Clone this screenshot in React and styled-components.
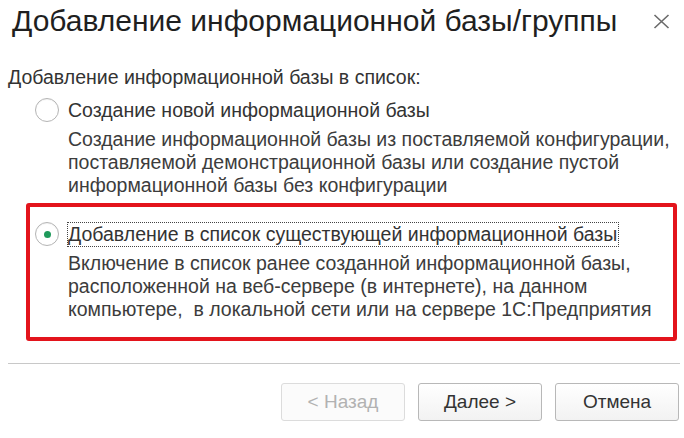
import styled, { createGlobalStyle } from "styled-components";

const GlobalStyle = createGlobalStyle`
    html, body {
        margin: 0;
        padding: 0;
        background: #ffffff;
    }
    body {
        font-family: "Liberation Sans", Arial, sans-serif;
        color: #333333;
    }
`;

const Dialog = styled.div`
    width: 684px;
    height: 438px;
    display: flex;
    flex-direction: column;
    background: #ffffff;
    overflow: hidden;
`;

const Header = styled.div`
    height: 42px;
    padding: 0 14px 0 12px;
    display: flex;
    align-items: center;
    justify-content: space-between;
`;

const Title = styled.h1`
    margin: 0;
    font-size: 30px;
    font-weight: normal;
    line-height: 40px;
    color: #1f1f1f;
    white-space: nowrap;
`;

const Close = styled.button`
    width: 18px;
    height: 16px;
    padding: 0;
    border: 0;
    background: none;
    display: flex;
    align-items: center;
    justify-content: center;
    cursor: pointer;
`;

const Body = styled.div`
    flex-grow: 1;
    padding: 0 4px 0 8px;
    display: flex;
    flex-direction: column;
`;

const Caption = styled.div`
    margin-top: 23px;
    font-size: 19.5px;
    line-height: 24px;
`;

const OptionList = styled.div`
    margin: 8px 0 0 27px;
    display: flex;
    flex-direction: column;
    gap: 24px;
`;

const Option = styled.div`
    position: relative;

    &::after {
        content: "";
        display: ${({$marked}) => $marked ? 'block' : 'none'};
        position: absolute;
        top: -18px;
        bottom: -20px;
        left: -9px;
        right: 3px;
        border: 4px solid #e3141c;
        border-radius: 3px;
        pointer-events: none;
    }
`;

const OptionRow = styled.label`
    height: 26px;
    display: flex;
    align-items: center;
    gap: 8px;
    font-size: 19.5px;
    cursor: pointer;
`;

const Radio = styled.span`
    width: 22px;
    height: 22px;
    flex-shrink: 0;
    border: 1px solid #b4b4b4;
    border-radius: 50%;
    background: #ffffff;
    display: flex;
    align-items: center;
    justify-content: center;
    box-shadow: inset 0 1px 1px rgba(0, 0, 0, 0.05);

    &::after {
        content: "";
        display: ${({$checked}) => $checked ? 'block' : 'none'};
        width: 7px;
        height: 7px;
        border-radius: 50%;
        background: #1f9a5b;
    }
`;

const Label = styled.span`
    line-height: 23px;
    padding-right: 1px;
    border: 1px dotted ${({$focused}) => $focused ? '#444444' : 'transparent'};
    white-space: nowrap;
`;

const Description = styled.p`
    margin: 5px 0 0 33px;
    font-size: 19.5px;
    line-height: 23px;
    color: #3c3c3c;
`;

const Separator = styled.hr`
    margin: 42px 0 0;
    border: 0;
    border-top: 1px solid #c8c8c8;
`;

const Footer = styled.div`
    padding: 19px 1px 0 0;
    display: flex;
    justify-content: flex-end;
    gap: 13px;
`;

const Button = styled.button`
    width: 124px;
    height: 38px;
    font-family: "Liberation Sans", Arial, sans-serif;
    font-size: 19px;
    color: ${({disabled}) => disabled ? '#b2b2b2' : '#333333'};
    background: ${({disabled}) => disabled ? '#fbfbfb' : 'linear-gradient(#ffffff, #f2f2f2)'};
    border: 1px solid ${({disabled}) => disabled ? '#dcdcdc' : '#b8b8b8'};
    border-radius: 3px;
    cursor: pointer;
`;

const options = [
    {
        title: 'Создание новой информационной базы',
        text: 'Создание информационной базы из поставляемой конфигурации, поставляемой демонстрационной базы или создание пустой информационной базы без конфигурации',
        checked: false,
    },
    {
        title: 'Добавление в список существующей информационной базы',
        text: 'Включение в список ранее созданной информационной базы, расположенной на веб-сервере (в интернете), на данном компьютере,\u00a0 в локальной сети или на сервере 1С:Предприятия',
        checked: true,
    },
];

export default function App() {
    return (
        <>
            <GlobalStyle/>
            <Dialog>
                <Header>
                    <Title>Добавление информационной базы/группы</Title>
                    <Close aria-label="Закрыть">
                        <svg width="17" height="15" viewBox="0 0 17 15">
                            <path d="M1.5 1 L15.5 14 M15.5 1 L1.5 14" stroke="#6a6a6a" strokeWidth="1.6" fill="none"/>
                        </svg>
                    </Close>
                </Header>
                <Body>
                    <Caption>Добавление информационной базы в список:</Caption>
                    <OptionList>
                        {options.map((item) => (
                            <Option key={item.title} $marked={item.checked}>
                                <OptionRow>
                                    <Radio $checked={item.checked}/>
                                    <Label $focused={item.checked}>{item.title}</Label>
                                </OptionRow>
                                <Description>{item.text}</Description>
                            </Option>
                        ))}
                    </OptionList>
                    <Separator/>
                    <Footer>
                        <Button disabled>&lt; Назад</Button>
                        <Button>Далее &gt;</Button>
                        <Button>Отмена</Button>
                    </Footer>
                </Body>
            </Dialog>
        </>
    );
}
